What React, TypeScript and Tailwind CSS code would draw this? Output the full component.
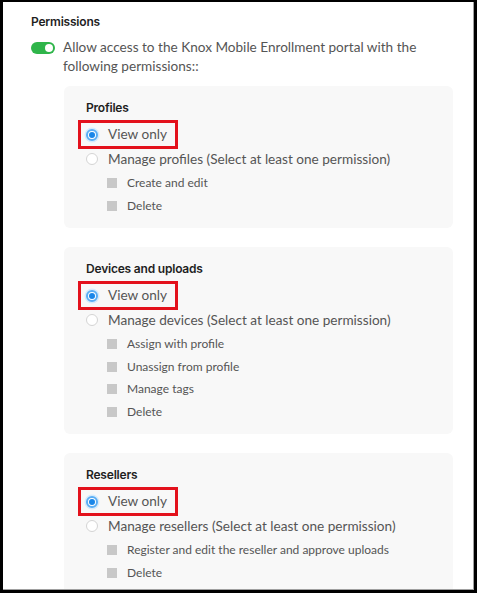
import React from "react";

const body = { fontFamily: "Lato, 'Open Sans', sans-serif" };
const head = { fontFamily: "Inter, 'Noto Sans', sans-serif" };

function RadioOn() {
  return (
    <span className="flex h-[12px] w-[12px] shrink-0 items-center justify-center rounded-full border-[2px] border-[#5aaef5] bg-white shadow-[0_0_0_1.5px_#d6ebfc]">
      <span className="h-[6px] w-[6px] rounded-full bg-[#1a86e8]" />
    </span>
  );
}

function RadioOff() {
  return <span className="h-[12px] w-[12px] shrink-0 rounded-full border border-[#d4d4d4] bg-white" />;
}

function Check({ label }: { label: string }) {
  return (
    <div className="flex h-[22.5px] items-center gap-[10px] pl-[21px]">
      <span className="h-[10px] w-[10px] shrink-0 bg-[#c8c8c8]" />
      <span className="text-[12px] text-[#555]" style={body}>
        {label}
      </span>
    </div>
  );
}

function Card({ title, manage, checks }: { title: string; manage: string; checks: string[] }) {
  return (
    <div className="w-[389px] rounded-[6px] bg-[#f8f8f8] pb-[11px] pl-[22px] pt-[14px]">
      <div className="text-[12px] font-semibold leading-[16px] tracking-[-0.2px] text-[#1f1f1f]" style={head}>
        {title}
      </div>
      <div className="ml-[-8px] mt-[4px] inline-flex h-[29px] items-center gap-[10px] border-[3px] border-[#e3111c] pl-[5px] pr-[8px]">
        <RadioOn />
        <span className="text-[13.6px] text-[#555]" style={body}>
          View only
        </span>
      </div>
      <div className="flex h-[20px] items-center gap-[10px]">
        <RadioOff />
        <span className="text-[13.6px] text-[#555]" style={body}>
          {manage}
        </span>
      </div>
      <div className="pt-[3px]">
        {checks.map((c) => (
          <Check key={c} label={c} />
        ))}
      </div>
    </div>
  );
}

export default function App() {
  return (
    <div className="h-[593px] w-[477px] overflow-hidden border-b-[3px] border-l-[3px] border-r-[3px] border-t-[2px] border-black">
      <div className="h-full w-full overflow-hidden border-b border-r border-[#a0a0a0] bg-white">
        <div className="pl-[28px] pr-[20px] pt-[12px]">
          <div className="text-[12px] font-semibold leading-[16px] tracking-[-0.2px] text-[#1f1f1f]" style={head}>
            Permissions
          </div>
          <div className="mt-[8px] flex gap-[8px]">
            <span className="mt-[4px] flex h-[12px] w-[24px] shrink-0 items-center justify-end rounded-full bg-[#2fb54a] pr-[2px]">
              <span className="h-[8px] w-[8px] rounded-full bg-white" />
            </span>
            <p className="text-[13.6px] leading-[19px] text-[#555]" style={body}>
              Allow access to the Knox Mobile Enrollment portal with the following permissions::
            </p>
          </div>
          <div className="ml-[33px] mt-[10px] flex flex-col gap-[19px]">
            <Card
              title="Profiles"
              manage="Manage profiles (Select at least one permission)"
              checks={["Create and edit", "Delete"]}
            />
            <Card
              title="Devices and uploads"
              manage="Manage devices (Select at least one permission)"
              checks={["Assign with profile", "Unassign from profile", "Manage tags", "Delete"]}
            />
            <Card
              title="Resellers"
              manage="Manage resellers (Select at least one permission)"
              checks={["Register and edit the reseller and approve uploads", "Delete"]}
            />
          </div>
        </div>
      </div>
    </div>
  );
}
